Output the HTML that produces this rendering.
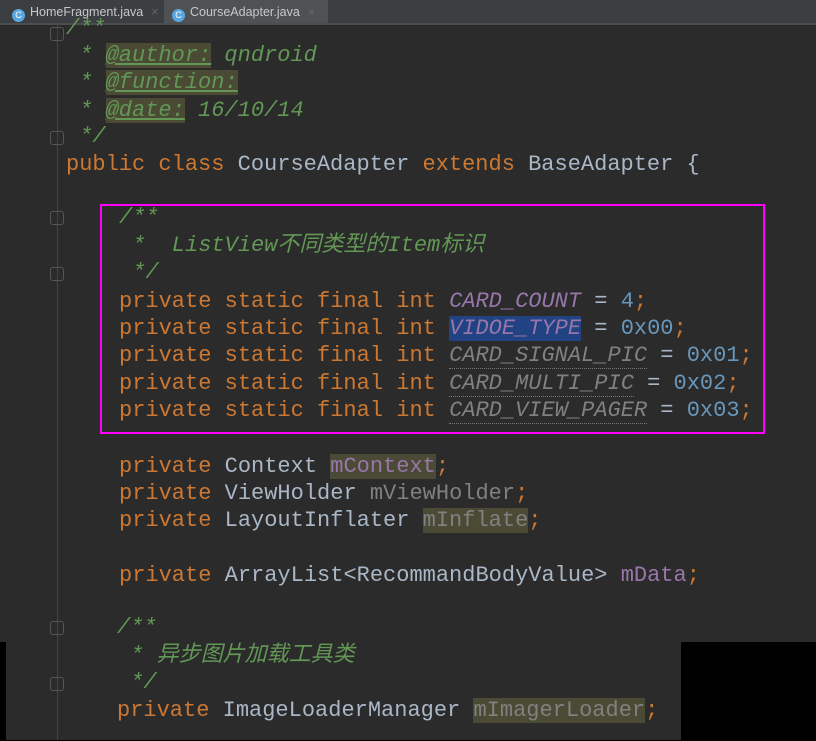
<!DOCTYPE html>
<html><head><meta charset="utf-8"><style>
body{margin:0;width:816px;height:741px;background:#2b2b2b;overflow:hidden;position:relative;font-family:"Liberation Mono","Noto Sans CJK SC",monospace;}
.tabs{position:absolute;left:0;top:0;width:816px;height:23px;background:#3c3f41;border-bottom:2px solid #4b4d4f;}
.tab{position:absolute;top:0;height:23px;font:12.5px "Liberation Sans",sans-serif;color:#c8c8c8;line-height:25px;white-space:nowrap;}
.tab i{display:inline-block;width:13px;height:13px;border-radius:50%;background:#5aa6e0;color:#fff;font-style:normal;font-size:9px;text-align:center;line-height:13px;margin-right:5px;vertical-align:-2px}
.tab b{font-weight:normal;color:#666;margin-left:8px}
.l{position:absolute;font-size:22px;line-height:27px;height:27px;white-space:pre;color:#a9b7c6;}
.k{color:#cc7832}.c{color:#629755;font-style:italic}.cs{color:#9876aa;font-style:italic}.n{color:#6897bb}
.g{color:#808080;font-style:italic;border-bottom:1px dotted #777}
.f{color:#9876aa}.fg{color:#808080}.hl{background:#4a4a35}
.sel{background:#214283}
.ann{background:#4a4a35;text-decoration:underline}
.gl{position:absolute;left:57px;width:1px;background:#444;}
.fold{position:absolute;left:50px;width:14px;height:14px;border:1px solid #555;border-radius:3px;box-sizing:border-box}
</style></head><body>
<div class="tabs">
<div class="tab" style="left:12px;width:152px"><i>C</i>HomeFragment.java<b>×</b></div>
<div class="tab" style="left:164px;width:156px;background:#4e5254;padding-left:8px"><i>C</i>CourseAdapter.java<b>×</b></div>
</div>
<div class="gl" style="top:25px;height:716px"></div>
<div class="fold" style="top:27px"></div>
<div class="fold" style="top:131px"></div>
<div class="fold" style="top:211px"></div>
<div class="fold" style="top:267px"></div>
<div class="fold" style="top:621px"></div>
<div class="fold" style="top:677px"></div>

<div class="l c" style="left:66px;top:15px">/**</div>
<div class="l c" style="left:66px;top:42px"> * <span class="ann">@author:</span> qndroid</div>
<div class="l c" style="left:66px;top:69px"> * <span class="ann">@function:</span></div>
<div class="l c" style="left:66px;top:97px"> * <span class="ann">@date:</span> 16/10/14</div>
<div class="l c" style="left:66px;top:123px"> */</div>
<div class="l" style="left:66px;top:151px"><span class="k">public class</span> CourseAdapter <span class="k">extends</span> BaseAdapter {</div>

<div class="l c" style="left:119px;top:204px">/**</div>
<div class="l c" style="left:119px;top:232px"> *  ListView不同类型的Item标识</div>
<div class="l c" style="left:119px;top:259px"> */</div>
<div class="l" style="left:119px;top:288px"><span class="k">private static final int</span> <span class="cs">CARD_COUNT</span> = <span class="n">4</span><span class="k">;</span></div>
<div class="l" style="left:119px;top:315px"><span class="k">private static final int</span> <span class="cs sel">VIDOE_TYPE</span> = <span class="n">0x00</span><span class="k">;</span></div>
<div class="l" style="left:119px;top:342px"><span class="k">private static final int</span> <span class="g">CARD_SIGNAL_PIC</span> = <span class="n">0x01</span><span class="k">;</span></div>
<div class="l" style="left:119px;top:370px"><span class="k">private static final int</span> <span class="g">CARD_MULTI_PIC</span> = <span class="n">0x02</span><span class="k">;</span></div>
<div class="l" style="left:119px;top:397px"><span class="k">private static final int</span> <span class="g">CARD_VIEW_PAGER</span> = <span class="n">0x03</span><span class="k">;</span></div>
<div style="position:absolute;left:100px;top:204px;width:661px;height:226px;border:2px solid #ff00ff"></div>

<div class="l" style="left:119px;top:453px"><span class="k">private</span> Context <span class="f hl">mContext</span><span class="k">;</span></div>
<div class="l" style="left:119px;top:480px"><span class="k">private</span> ViewHolder <span class="fg">mViewHolder</span><span class="k">;</span></div>
<div class="l" style="left:119px;top:507px"><span class="k">private</span> LayoutInflater <span class="fg hl">mInflate</span><span class="k">;</span></div>
<div class="l" style="left:119px;top:562px"><span class="k">private</span> ArrayList&lt;RecommandBodyValue&gt; <span class="f">mData</span><span class="k">;</span></div>

<div class="l c" style="left:117px;top:614px">/**</div>
<div class="l c" style="left:117px;top:642px"> * 异步图片加载工具类</div>
<div class="l c" style="left:117px;top:669px"> */</div>
<div class="l" style="left:117px;top:697px"><span class="k">private</span> ImageLoaderManager <span class="fg hl">mImagerLoader</span><span class="k">;</span></div>

<div style="position:absolute;left:0;top:642px;width:6px;height:99px;background:#000"></div>
<div style="position:absolute;left:681px;top:642px;width:135px;height:99px;background:#000"></div>
<div style="position:absolute;left:0;top:740px;width:816px;height:1px;background:#000"></div>
</body></html>
